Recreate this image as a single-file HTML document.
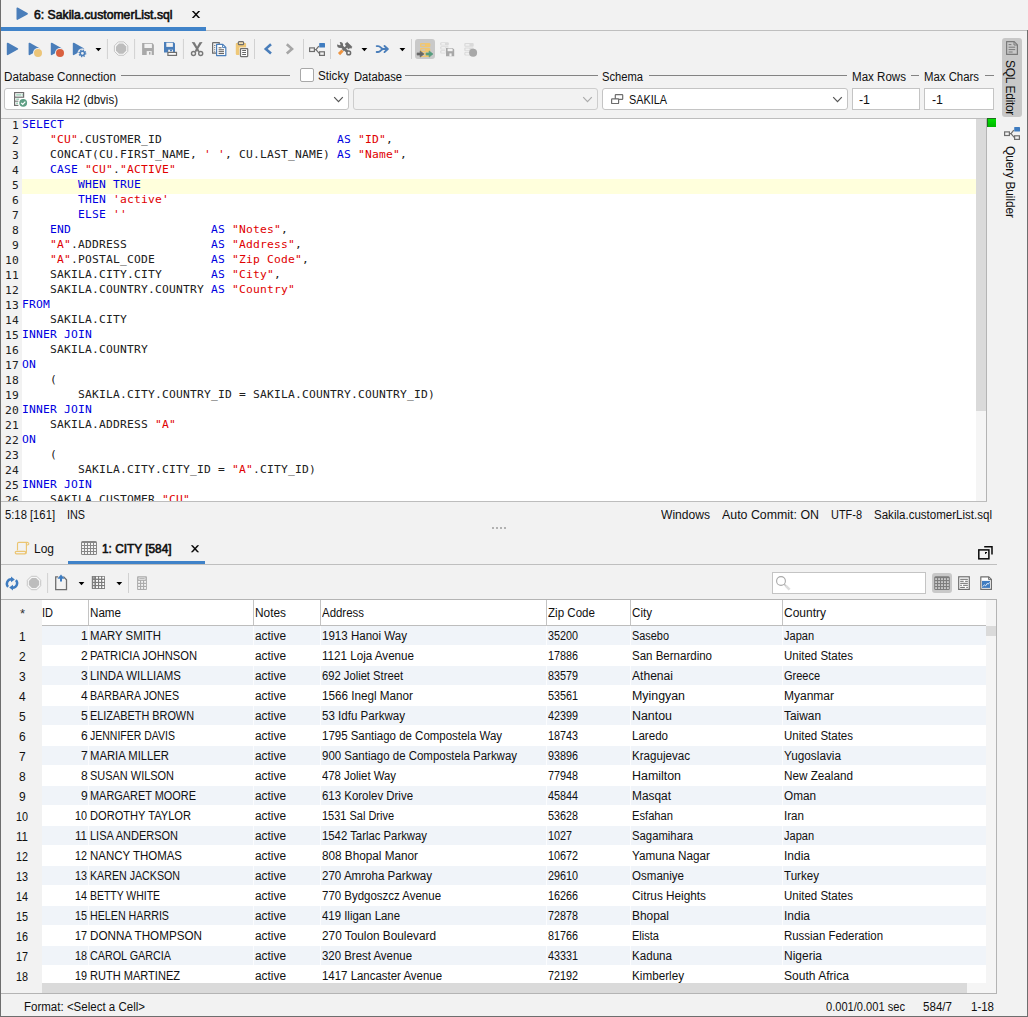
<!DOCTYPE html>
<html lang="en"><head><meta charset="utf-8"><title>DbVisualizer SQL Commander</title>
<style>
html,body{margin:0;padding:0}
body{width:1028px;height:1017px;position:relative;overflow:hidden;background:#f2f2f2;font-family:"Liberation Sans",sans-serif;font-size:12px;color:#000}
.a{position:absolute}
.t{position:absolute;white-space:pre;line-height:16px;height:16px;font-size:12px;color:#101010}
.b{font-weight:bold}
.sb{-webkit-text-stroke:0.6px #101010}
.combo{position:absolute;box-sizing:border-box;border:1px solid #c4c4c4;border-radius:3px;background:#fff;height:22px}
.combo.dis{background:#f2f2f2;border-color:#cdcdcd}
.code{position:absolute;white-space:pre;font-family:"DejaVu Sans Mono","Liberation Mono",monospace;font-size:11.3px;letter-spacing:0.197px;line-height:15px;height:15px;color:#202020}
.gn{position:absolute;white-space:pre;font-family:"DejaVu Sans Mono","Liberation Mono",monospace;font-size:11.3px;letter-spacing:0.197px;line-height:15px;height:15px;color:#202020;left:0;width:18px;text-align:right}
.k{color:#0000e0}
.s{color:#e00000}
svg{position:absolute;overflow:visible}
</style></head>
<body>
<div class="a" style="left:0px;top:0px;width:1px;height:1017px;background:#6e6e6e;"></div>
<div class="a" style="left:0px;top:1016px;width:1028px;height:1px;background:#6e6e6e;"></div>
<div class="a" style="left:1027px;top:30px;width:1px;height:987px;background:#6e6e6e;"></div>
<!-- editor tab -->
<span class="t sb" style="left:34px;top:7px;transform:scaleX(1.0180);transform-origin:0 0;">6: Sakila.customerList.sql</span>
<div class="a" style="left:1px;top:27px;width:205px;height:4px;background:#4083c9;"></div>
<div class="a" style="left:206px;top:30px;width:821px;height:1px;background:#bfbfbf;"></div>
<!-- main toolbar -->
<span class="t " style="left:4px;top:69px;transform:scaleX(0.9705);transform-origin:0 0;">Database Connection</span>
<div class="a" style="left:121px;top:75px;width:169px;height:1px;background:#838383;"></div>
<div class="a" style="left:300px;top:68px;width:14px;height:14px;background:#fff;box-sizing:border-box;border:1px solid #a8a8a8;border-radius:2px"></div>
<span class="t " style="left:318px;top:68px;transform:scaleX(0.9686);transform-origin:0 0;">Sticky</span>
<span class="t " style="left:353.5px;top:69px;transform:scaleX(0.9344);transform-origin:0 0;">Database</span>
<div class="a" style="left:405px;top:75px;width:193px;height:1px;background:#838383;"></div>
<span class="t " style="left:602px;top:69px;transform:scaleX(0.9314);transform-origin:0 0;">Schema</span>
<div class="a" style="left:649px;top:75px;width:198px;height:1px;background:#838383;"></div>
<span class="t " style="left:852px;top:69px;transform:scaleX(0.9641);transform-origin:0 0;">Max Rows</span>
<div class="a" style="left:911px;top:75px;width:8px;height:1px;background:#838383;"></div>
<span class="t " style="left:924px;top:69px;transform:scaleX(0.9480);transform-origin:0 0;">Max Chars</span>
<div class="a" style="left:985px;top:75px;width:9px;height:1px;background:#838383;"></div>
<div class="combo" style="left:4px;top:88px;width:345px"></div>
<span class="t " style="left:31px;top:92px;transform:scaleX(0.9592);transform-origin:0 0;">Sakila H2 (dbvis)</span>
<div class="combo dis" style="left:353px;top:88px;width:245px"></div>
<div class="combo" style="left:602px;top:88px;width:246px"></div>
<span class="t " style="left:629px;top:92px;transform:scaleX(0.9042);transform-origin:0 0;">SAKILA</span>
<div class="combo" style="left:852px;top:88px;width:68px;border-radius:0"></div>
<span class="t " style="left:859px;top:92px;transform:scaleX(1.0309);transform-origin:0 0;">-1</span>
<div class="combo" style="left:924px;top:88px;width:70px;border-radius:0"></div>
<span class="t " style="left:932px;top:92px;transform:scaleX(1.0309);transform-origin:0 0;">-1</span>
<!-- SQL editor -->
<div class="a" style="left:1px;top:118px;width:986px;height:1px;background:#bdbdbd;"></div>
<div class="a" style="left:1px;top:119px;width:21px;height:382px;background:#f2f2f2;"></div>
<div class="a" style="left:22px;top:119px;width:954px;height:382px;background:#fff;"></div>
<div class="a" style="left:976px;top:119px;width:10px;height:382px;background:#f5f5f5;"></div>
<div class="a" style="left:976px;top:119px;width:10px;height:292px;background:#dadada;"></div>
<div class="a" style="left:986px;top:118px;width:1px;height:384px;background:#b4b4b4;"></div>
<div class="a" style="left:1px;top:501px;width:986px;height:1px;background:#bdbdbd;"></div>
<div class="a" style="left:987px;top:118px;width:9px;height:9px;background:#00d200;border-left:1px solid #1e6e1e;border-top:1px solid #1e6e1e;box-sizing:border-box;background:linear-gradient(#00e000,#00b400)"></div>
<div class="a" style="left:22px;top:179px;width:954px;height:15px;background:#ffffdc;"></div>
<div class="a" style="left:1px;top:119px;width:975px;height:382px;overflow:hidden">
<span class="gn" style="top:-1px">1</span><span class="code" style="left:21px;top:-2px"><span class="k">SELECT</span></span>
<span class="gn" style="top:14px">2</span><span class="code" style="left:21px;top:13px">    <span class="s">"CU"</span>.CUSTOMER_ID                         <span class="k">AS</span> <span class="s">"ID"</span>,</span>
<span class="gn" style="top:29px">3</span><span class="code" style="left:21px;top:28px">    CONCAT(CU.FIRST_NAME, <span class="s">' '</span>, CU.LAST_NAME) <span class="k">AS</span> <span class="s">"Name"</span>,</span>
<span class="gn" style="top:44px">4</span><span class="code" style="left:21px;top:43px">    <span class="k">CASE</span> <span class="s">"CU"</span>.<span class="s">"ACTIVE"</span></span>
<span class="gn" style="top:59px">5</span><span class="code" style="left:21px;top:58px">        <span class="k">WHEN TRUE</span></span>
<span class="gn" style="top:74px">6</span><span class="code" style="left:21px;top:73px">        <span class="k">THEN</span> <span class="s">'active'</span></span>
<span class="gn" style="top:89px">7</span><span class="code" style="left:21px;top:88px">        <span class="k">ELSE</span> <span class="s">''</span></span>
<span class="gn" style="top:104px">8</span><span class="code" style="left:21px;top:103px">    <span class="k">END</span>                    <span class="k">AS</span> <span class="s">"Notes"</span>,</span>
<span class="gn" style="top:119px">9</span><span class="code" style="left:21px;top:118px">    <span class="s">"A"</span>.ADDRESS            <span class="k">AS</span> <span class="s">"Address"</span>,</span>
<span class="gn" style="top:134px">10</span><span class="code" style="left:21px;top:133px">    <span class="s">"A"</span>.POSTAL_CODE        <span class="k">AS</span> <span class="s">"Zip Code"</span>,</span>
<span class="gn" style="top:149px">11</span><span class="code" style="left:21px;top:148px">    SAKILA.CITY.CITY       <span class="k">AS</span> <span class="s">"City"</span>,</span>
<span class="gn" style="top:164px">12</span><span class="code" style="left:21px;top:163px">    SAKILA.COUNTRY.COUNTRY <span class="k">AS</span> <span class="s">"Country"</span></span>
<span class="gn" style="top:179px">13</span><span class="code" style="left:21px;top:178px"><span class="k">FROM</span></span>
<span class="gn" style="top:194px">14</span><span class="code" style="left:21px;top:193px">    SAKILA.CITY</span>
<span class="gn" style="top:209px">15</span><span class="code" style="left:21px;top:208px"><span class="k">INNER JOIN</span></span>
<span class="gn" style="top:224px">16</span><span class="code" style="left:21px;top:223px">    SAKILA.COUNTRY</span>
<span class="gn" style="top:239px">17</span><span class="code" style="left:21px;top:238px"><span class="k">ON</span></span>
<span class="gn" style="top:254px">18</span><span class="code" style="left:21px;top:253px">    (</span>
<span class="gn" style="top:269px">19</span><span class="code" style="left:21px;top:268px">        SAKILA.CITY.COUNTRY_ID = SAKILA.COUNTRY.COUNTRY_ID)</span>
<span class="gn" style="top:284px">20</span><span class="code" style="left:21px;top:283px"><span class="k">INNER JOIN</span></span>
<span class="gn" style="top:299px">21</span><span class="code" style="left:21px;top:298px">    SAKILA.ADDRESS <span class="s">"A"</span></span>
<span class="gn" style="top:314px">22</span><span class="code" style="left:21px;top:313px"><span class="k">ON</span></span>
<span class="gn" style="top:329px">23</span><span class="code" style="left:21px;top:328px">    (</span>
<span class="gn" style="top:344px">24</span><span class="code" style="left:21px;top:343px">        SAKILA.CITY.CITY_ID = <span class="s">"A"</span>.CITY_ID)</span>
<span class="gn" style="top:359px">25</span><span class="code" style="left:21px;top:358px"><span class="k">INNER JOIN</span></span>
<span class="gn" style="top:374px">26</span><span class="code" style="left:21px;top:373px">    SAKILA.CUSTOMER <span class="s">"CU"</span></span>
</div>
<span class="t " style="left:5px;top:507px;transform:scaleX(0.9367);transform-origin:0 0;">5:18 [161]</span>
<span class="t " style="left:67px;top:507px;transform:scaleX(0.8998);transform-origin:0 0;">INS</span>
<span class="t " style="left:661px;top:507px;transform:scaleX(1.0066);transform-origin:0 0;">Windows</span>
<span class="t " style="left:722px;top:507px;transform:scaleX(1.0317);transform-origin:0 0;">Auto Commit: ON</span>
<span class="t " style="left:831px;top:507px;transform:scaleX(0.9119);transform-origin:0 0;">UTF-8</span>
<span class="t " style="left:874px;top:507px;transform:scaleX(0.9616);transform-origin:0 0;">Sakila.customerList.sql</span>
<div class="a" style="left:492px;top:527px;width:2px;height:2px;background:#b2b2b2;"></div>
<div class="a" style="left:496px;top:527px;width:2px;height:2px;background:#b2b2b2;"></div>
<div class="a" style="left:500px;top:527px;width:2px;height:2px;background:#b2b2b2;"></div>
<div class="a" style="left:504px;top:527px;width:2px;height:2px;background:#b2b2b2;"></div>
<!-- result tabs -->
<span class="t " style="left:33.6px;top:541px;transform:scaleX(0.9990);transform-origin:0 0;">Log</span>
<span class="t sb" style="left:102px;top:541px;transform:scaleX(0.9861);transform-origin:0 0;">1: CITY [584]</span>
<div class="a" style="left:68px;top:561px;width:137px;height:4px;background:#4083c9;"></div>
<div class="a" style="left:1px;top:564px;width:996px;height:1px;background:#bfbfbf;"></div>
<!-- result toolbar -->
<div class="a" style="left:772px;top:572px;width:154px;height:22px;box-sizing:border-box;border:1px solid #c4c4c4;background:#fff"></div>
<!-- result grid -->
<div class="a" style="left:1px;top:599px;width:996px;height:1px;background:#b4b4b4;"></div>
<div class="a" style="left:996px;top:599px;width:1px;height:395px;background:#b4b4b4;"></div>
<div class="a" style="left:1px;top:993px;width:996px;height:1px;background:#b4b4b4;"></div>
<div class="a" style="left:42px;top:600px;width:944px;height:25px;background:#fff;"></div>
<div class="a" style="left:42px;top:625px;width:944px;height:1px;background:#bdbdbd;"></div>
<div class="a" style="left:42px;top:626px;width:944px;height:357px;background:#fff;"></div>
<span class="t " style="left:20px;top:606px;font-size:13px;color:#333">*</span>
<span class="t " style="left:41.5px;top:605px;transform:scaleX(0.9167);transform-origin:0 0;">ID</span>
<div class="a" style="left:88px;top:600px;width:1px;height:25px;background:#c4c4c4;"></div>
<span class="t " style="left:90px;top:605px;transform:scaleX(0.9685);transform-origin:0 0;">Name</span>
<div class="a" style="left:253px;top:600px;width:1px;height:25px;background:#c4c4c4;"></div>
<span class="t " style="left:255px;top:605px;transform:scaleX(0.9889);transform-origin:0 0;">Notes</span>
<div class="a" style="left:320px;top:600px;width:1px;height:25px;background:#c4c4c4;"></div>
<span class="t " style="left:322px;top:605px;transform:scaleX(0.9541);transform-origin:0 0;">Address</span>
<div class="a" style="left:546px;top:600px;width:1px;height:25px;background:#c4c4c4;"></div>
<span class="t " style="left:548px;top:605px;transform:scaleX(0.9653);transform-origin:0 0;">Zip Code</span>
<div class="a" style="left:630px;top:600px;width:1px;height:25px;background:#c4c4c4;"></div>
<span class="t " style="left:632px;top:605px;transform:scaleX(0.9678);transform-origin:0 0;">City</span>
<div class="a" style="left:782px;top:600px;width:1px;height:25px;background:#c4c4c4;"></div>
<span class="t " style="left:784px;top:605px;transform:scaleX(0.9996);transform-origin:0 0;">Country</span>
<div class="a" style="left:0;top:626px;width:986px;height:357px;overflow:hidden">
<div class="a" style="left:42px;top:0px;width:944px;height:19px;background:#f0f4f9"></div><span class="t " style="left:19px;top:3px;">1</span>
<span class="t " style="left:81px;top:2px;">1</span>
<span class="t " style="left:90px;top:2px;transform:scaleX(0.9479);transform-origin:0 0;">MARY SMITH</span>
<span class="t " style="left:255px;top:2px;transform:scaleX(0.9889);transform-origin:0 0;">active</span>
<span class="t " style="left:322px;top:2px;transform:scaleX(0.9630);transform-origin:0 0;">1913 Hanoi Way</span>
<span class="t " style="left:548px;top:2px;transform:scaleX(0.8991);transform-origin:0 0;">35200</span>
<span class="t " style="left:632px;top:2px;transform:scaleX(0.9091);transform-origin:0 0;">Sasebo</span>
<span class="t " style="left:784px;top:2px;transform:scaleX(0.9176);transform-origin:0 0;">Japan</span>
<span class="t " style="left:19px;top:23px;">2</span>
<span class="t " style="left:81px;top:22px;">2</span>
<span class="t " style="left:90px;top:22px;transform:scaleX(0.9312);transform-origin:0 0;">PATRICIA JOHNSON</span>
<span class="t " style="left:255px;top:22px;transform:scaleX(0.9889);transform-origin:0 0;">active</span>
<span class="t " style="left:322px;top:22px;transform:scaleX(0.9687);transform-origin:0 0;">1121 Loja Avenue</span>
<span class="t " style="left:548px;top:22px;transform:scaleX(0.8991);transform-origin:0 0;">17886</span>
<span class="t " style="left:632px;top:22px;transform:scaleX(0.9593);transform-origin:0 0;">San Bernardino</span>
<span class="t " style="left:784px;top:22px;transform:scaleX(0.9578);transform-origin:0 0;">United States</span>
<div class="a" style="left:42px;top:40px;width:944px;height:19px;background:#f0f4f9"></div><span class="t " style="left:19px;top:43px;">3</span>
<span class="t " style="left:81px;top:42px;">3</span>
<span class="t " style="left:90px;top:42px;transform:scaleX(0.9542);transform-origin:0 0;">LINDA WILLIAMS</span>
<span class="t " style="left:255px;top:42px;transform:scaleX(0.9889);transform-origin:0 0;">active</span>
<span class="t " style="left:322px;top:42px;transform:scaleX(0.9341);transform-origin:0 0;">692 Joliet Street</span>
<span class="t " style="left:548px;top:42px;transform:scaleX(0.8991);transform-origin:0 0;">83579</span>
<span class="t " style="left:632px;top:42px;transform:scaleX(1.0074);transform-origin:0 0;">Athenai</span>
<span class="t " style="left:784px;top:42px;transform:scaleX(0.9148);transform-origin:0 0;">Greece</span>
<span class="t " style="left:19px;top:63px;">4</span>
<span class="t " style="left:81px;top:62px;">4</span>
<span class="t " style="left:90px;top:62px;transform:scaleX(0.8897);transform-origin:0 0;">BARBARA JONES</span>
<span class="t " style="left:255px;top:62px;transform:scaleX(0.9889);transform-origin:0 0;">active</span>
<span class="t " style="left:322px;top:62px;transform:scaleX(0.9743);transform-origin:0 0;">1566 Inegl Manor</span>
<span class="t " style="left:548px;top:62px;transform:scaleX(0.8991);transform-origin:0 0;">53561</span>
<span class="t " style="left:632px;top:62px;transform:scaleX(1.0320);transform-origin:0 0;">Myingyan</span>
<span class="t " style="left:784px;top:62px;transform:scaleX(0.9998);transform-origin:0 0;">Myanmar</span>
<div class="a" style="left:42px;top:80px;width:944px;height:19px;background:#f0f4f9"></div><span class="t " style="left:19px;top:83px;">5</span>
<span class="t " style="left:81px;top:82px;">5</span>
<span class="t " style="left:90px;top:82px;transform:scaleX(0.9068);transform-origin:0 0;">ELIZABETH BROWN</span>
<span class="t " style="left:255px;top:82px;transform:scaleX(0.9889);transform-origin:0 0;">active</span>
<span class="t " style="left:322px;top:82px;transform:scaleX(0.9646);transform-origin:0 0;">53 Idfu Parkway</span>
<span class="t " style="left:548px;top:82px;transform:scaleX(0.8991);transform-origin:0 0;">42399</span>
<span class="t " style="left:632px;top:82px;transform:scaleX(1.0338);transform-origin:0 0;">Nantou</span>
<span class="t " style="left:784px;top:82px;transform:scaleX(0.9906);transform-origin:0 0;">Taiwan</span>
<span class="t " style="left:19px;top:103px;">6</span>
<span class="t " style="left:81px;top:102px;">6</span>
<span class="t " style="left:90px;top:102px;transform:scaleX(0.8751);transform-origin:0 0;">JENNIFER DAVIS</span>
<span class="t " style="left:255px;top:102px;transform:scaleX(0.9889);transform-origin:0 0;">active</span>
<span class="t " style="left:322px;top:102px;transform:scaleX(0.9557);transform-origin:0 0;">1795 Santiago de Compostela Way</span>
<span class="t " style="left:548px;top:102px;transform:scaleX(0.8991);transform-origin:0 0;">18743</span>
<span class="t " style="left:632px;top:102px;transform:scaleX(0.9635);transform-origin:0 0;">Laredo</span>
<span class="t " style="left:784px;top:102px;transform:scaleX(0.9578);transform-origin:0 0;">United States</span>
<div class="a" style="left:42px;top:120px;width:944px;height:19px;background:#f0f4f9"></div><span class="t " style="left:19px;top:123px;">7</span>
<span class="t " style="left:81px;top:122px;">7</span>
<span class="t " style="left:90px;top:122px;transform:scaleX(0.9402);transform-origin:0 0;">MARIA MILLER</span>
<span class="t " style="left:255px;top:122px;transform:scaleX(0.9889);transform-origin:0 0;">active</span>
<span class="t " style="left:322px;top:122px;transform:scaleX(0.9553);transform-origin:0 0;">900 Santiago de Compostela Parkway</span>
<span class="t " style="left:548px;top:122px;transform:scaleX(0.8991);transform-origin:0 0;">93896</span>
<span class="t " style="left:632px;top:122px;transform:scaleX(0.9661);transform-origin:0 0;">Kragujevac</span>
<span class="t " style="left:784px;top:122px;transform:scaleX(0.9821);transform-origin:0 0;">Yugoslavia</span>
<span class="t " style="left:19px;top:143px;">8</span>
<span class="t " style="left:81px;top:142px;">8</span>
<span class="t " style="left:90px;top:142px;transform:scaleX(0.9129);transform-origin:0 0;">SUSAN WILSON</span>
<span class="t " style="left:255px;top:142px;transform:scaleX(0.9889);transform-origin:0 0;">active</span>
<span class="t " style="left:322px;top:142px;transform:scaleX(0.9456);transform-origin:0 0;">478 Joliet Way</span>
<span class="t " style="left:548px;top:142px;transform:scaleX(0.8991);transform-origin:0 0;">77948</span>
<span class="t " style="left:632px;top:142px;transform:scaleX(1.0349);transform-origin:0 0;">Hamilton</span>
<span class="t " style="left:784px;top:142px;transform:scaleX(0.9759);transform-origin:0 0;">New Zealand</span>
<div class="a" style="left:42px;top:160px;width:944px;height:19px;background:#f0f4f9"></div><span class="t " style="left:19px;top:163px;">9</span>
<span class="t " style="left:81px;top:162px;">9</span>
<span class="t " style="left:90px;top:162px;transform:scaleX(0.9102);transform-origin:0 0;">MARGARET MOORE</span>
<span class="t " style="left:255px;top:162px;transform:scaleX(0.9889);transform-origin:0 0;">active</span>
<span class="t " style="left:322px;top:162px;transform:scaleX(0.9541);transform-origin:0 0;">613 Korolev Drive</span>
<span class="t " style="left:548px;top:162px;transform:scaleX(0.8991);transform-origin:0 0;">45844</span>
<span class="t " style="left:632px;top:162px;transform:scaleX(0.9911);transform-origin:0 0;">Masqat</span>
<span class="t " style="left:784px;top:162px;transform:scaleX(0.9792);transform-origin:0 0;">Oman</span>
<span class="t " style="left:16px;top:183px;transform:scaleX(0.8991);transform-origin:0 0;">10</span>
<span class="t " style="left:75px;top:182px;transform:scaleX(0.8991);transform-origin:0 0;">10</span>
<span class="t " style="left:90px;top:182px;transform:scaleX(0.9255);transform-origin:0 0;">DOROTHY TAYLOR</span>
<span class="t " style="left:255px;top:182px;transform:scaleX(0.9889);transform-origin:0 0;">active</span>
<span class="t " style="left:322px;top:182px;transform:scaleX(0.9148);transform-origin:0 0;">1531 Sal Drive</span>
<span class="t " style="left:548px;top:182px;transform:scaleX(0.8991);transform-origin:0 0;">53628</span>
<span class="t " style="left:632px;top:182px;transform:scaleX(0.9311);transform-origin:0 0;">Esfahan</span>
<span class="t " style="left:784px;top:182px;transform:scaleX(0.9672);transform-origin:0 0;">Iran</span>
<div class="a" style="left:42px;top:200px;width:944px;height:19px;background:#f0f4f9"></div><span class="t " style="left:16px;top:203px;transform:scaleX(0.9634);transform-origin:0 0;">11</span>
<span class="t " style="left:75px;top:202px;transform:scaleX(0.9634);transform-origin:0 0;">11</span>
<span class="t " style="left:90px;top:202px;transform:scaleX(0.9163);transform-origin:0 0;">LISA ANDERSON</span>
<span class="t " style="left:255px;top:202px;transform:scaleX(0.9889);transform-origin:0 0;">active</span>
<span class="t " style="left:322px;top:202px;transform:scaleX(0.9445);transform-origin:0 0;">1542 Tarlac Parkway</span>
<span class="t " style="left:548px;top:202px;transform:scaleX(0.8991);transform-origin:0 0;">1027</span>
<span class="t " style="left:632px;top:202px;transform:scaleX(0.9427);transform-origin:0 0;">Sagamihara</span>
<span class="t " style="left:784px;top:202px;transform:scaleX(0.9176);transform-origin:0 0;">Japan</span>
<span class="t " style="left:16px;top:223px;transform:scaleX(0.8991);transform-origin:0 0;">12</span>
<span class="t " style="left:75px;top:222px;transform:scaleX(0.8991);transform-origin:0 0;">12</span>
<span class="t " style="left:90px;top:222px;transform:scaleX(0.9559);transform-origin:0 0;">NANCY THOMAS</span>
<span class="t " style="left:255px;top:222px;transform:scaleX(0.9889);transform-origin:0 0;">active</span>
<span class="t " style="left:322px;top:222px;transform:scaleX(0.9789);transform-origin:0 0;">808 Bhopal Manor</span>
<span class="t " style="left:548px;top:222px;transform:scaleX(0.8991);transform-origin:0 0;">10672</span>
<span class="t " style="left:632px;top:222px;transform:scaleX(0.9772);transform-origin:0 0;">Yamuna Nagar</span>
<span class="t " style="left:784px;top:222px;transform:scaleX(0.9992);transform-origin:0 0;">India</span>
<div class="a" style="left:42px;top:240px;width:944px;height:19px;background:#f0f4f9"></div><span class="t " style="left:16px;top:243px;transform:scaleX(0.8991);transform-origin:0 0;">13</span>
<span class="t " style="left:75px;top:242px;transform:scaleX(0.8991);transform-origin:0 0;">13</span>
<span class="t " style="left:90px;top:242px;transform:scaleX(0.8879);transform-origin:0 0;">KAREN JACKSON</span>
<span class="t " style="left:255px;top:242px;transform:scaleX(0.9889);transform-origin:0 0;">active</span>
<span class="t " style="left:322px;top:242px;transform:scaleX(0.9644);transform-origin:0 0;">270 Amroha Parkway</span>
<span class="t " style="left:548px;top:242px;transform:scaleX(0.8991);transform-origin:0 0;">29610</span>
<span class="t " style="left:632px;top:242px;transform:scaleX(0.9627);transform-origin:0 0;">Osmaniye</span>
<span class="t " style="left:784px;top:242px;transform:scaleX(0.9661);transform-origin:0 0;">Turkey</span>
<span class="t " style="left:16px;top:263px;transform:scaleX(0.8991);transform-origin:0 0;">14</span>
<span class="t " style="left:75px;top:262px;transform:scaleX(0.8991);transform-origin:0 0;">14</span>
<span class="t " style="left:90px;top:262px;transform:scaleX(0.8701);transform-origin:0 0;">BETTY WHITE</span>
<span class="t " style="left:255px;top:262px;transform:scaleX(0.9889);transform-origin:0 0;">active</span>
<span class="t " style="left:322px;top:262px;transform:scaleX(0.9556);transform-origin:0 0;">770 Bydgoszcz Avenue</span>
<span class="t " style="left:548px;top:262px;transform:scaleX(0.8991);transform-origin:0 0;">16266</span>
<span class="t " style="left:632px;top:262px;transform:scaleX(0.9820);transform-origin:0 0;">Citrus Heights</span>
<span class="t " style="left:784px;top:262px;transform:scaleX(0.9578);transform-origin:0 0;">United States</span>
<div class="a" style="left:42px;top:280px;width:944px;height:19px;background:#f0f4f9"></div><span class="t " style="left:16px;top:283px;transform:scaleX(0.8991);transform-origin:0 0;">15</span>
<span class="t " style="left:75px;top:282px;transform:scaleX(0.8991);transform-origin:0 0;">15</span>
<span class="t " style="left:90px;top:282px;transform:scaleX(0.8908);transform-origin:0 0;">HELEN HARRIS</span>
<span class="t " style="left:255px;top:282px;transform:scaleX(0.9889);transform-origin:0 0;">active</span>
<span class="t " style="left:322px;top:282px;transform:scaleX(0.9504);transform-origin:0 0;">419 Iligan Lane</span>
<span class="t " style="left:548px;top:282px;transform:scaleX(0.8991);transform-origin:0 0;">72878</span>
<span class="t " style="left:632px;top:282px;transform:scaleX(0.9903);transform-origin:0 0;">Bhopal</span>
<span class="t " style="left:784px;top:282px;transform:scaleX(0.9992);transform-origin:0 0;">India</span>
<span class="t " style="left:16px;top:303px;transform:scaleX(0.8991);transform-origin:0 0;">16</span>
<span class="t " style="left:75px;top:302px;transform:scaleX(0.8991);transform-origin:0 0;">17</span>
<span class="t " style="left:90px;top:302px;transform:scaleX(0.9728);transform-origin:0 0;">DONNA THOMPSON</span>
<span class="t " style="left:255px;top:302px;transform:scaleX(0.9889);transform-origin:0 0;">active</span>
<span class="t " style="left:322px;top:302px;transform:scaleX(0.9839);transform-origin:0 0;">270 Toulon Boulevard</span>
<span class="t " style="left:548px;top:302px;transform:scaleX(0.8991);transform-origin:0 0;">81766</span>
<span class="t " style="left:632px;top:302px;transform:scaleX(0.9201);transform-origin:0 0;">Elista</span>
<span class="t " style="left:784px;top:302px;transform:scaleX(0.9514);transform-origin:0 0;">Russian Federation</span>
<div class="a" style="left:42px;top:320px;width:944px;height:19px;background:#f0f4f9"></div><span class="t " style="left:16px;top:323px;transform:scaleX(0.8991);transform-origin:0 0;">17</span>
<span class="t " style="left:75px;top:322px;transform:scaleX(0.8991);transform-origin:0 0;">18</span>
<span class="t " style="left:90px;top:322px;transform:scaleX(0.8976);transform-origin:0 0;">CAROL GARCIA</span>
<span class="t " style="left:255px;top:322px;transform:scaleX(0.9889);transform-origin:0 0;">active</span>
<span class="t " style="left:322px;top:322px;transform:scaleX(0.9522);transform-origin:0 0;">320 Brest Avenue</span>
<span class="t " style="left:548px;top:322px;transform:scaleX(0.8991);transform-origin:0 0;">43331</span>
<span class="t " style="left:632px;top:322px;transform:scaleX(0.9668);transform-origin:0 0;">Kaduna</span>
<span class="t " style="left:784px;top:322px;transform:scaleX(0.9996);transform-origin:0 0;">Nigeria</span>
<span class="t " style="left:16px;top:343px;transform:scaleX(0.8991);transform-origin:0 0;">18</span>
<span class="t " style="left:75px;top:342px;transform:scaleX(0.8991);transform-origin:0 0;">19</span>
<span class="t " style="left:90px;top:342px;transform:scaleX(0.9205);transform-origin:0 0;">RUTH MARTINEZ</span>
<span class="t " style="left:255px;top:342px;transform:scaleX(0.9889);transform-origin:0 0;">active</span>
<span class="t " style="left:322px;top:342px;transform:scaleX(0.9533);transform-origin:0 0;">1417 Lancaster Avenue</span>
<span class="t " style="left:548px;top:342px;transform:scaleX(0.8991);transform-origin:0 0;">72192</span>
<span class="t " style="left:632px;top:342px;transform:scaleX(0.9747);transform-origin:0 0;">Kimberley</span>
<span class="t " style="left:784px;top:342px;transform:scaleX(1.0045);transform-origin:0 0;">South Africa</span>
<div class="a" style="left:88px;top:0px;width:1px;height:357px;background:rgba(255,255,255,.75)"></div><div class="a" style="left:253px;top:0px;width:1px;height:357px;background:rgba(255,255,255,.75)"></div><div class="a" style="left:320px;top:0px;width:1px;height:357px;background:rgba(255,255,255,.75)"></div><div class="a" style="left:546px;top:0px;width:1px;height:357px;background:rgba(255,255,255,.75)"></div><div class="a" style="left:630px;top:0px;width:1px;height:357px;background:rgba(255,255,255,.75)"></div><div class="a" style="left:782px;top:0px;width:1px;height:357px;background:rgba(255,255,255,.75)"></div></div>
<div class="a" style="left:986px;top:600px;width:10px;height:393px;background:#f5f5f5;"></div>
<div class="a" style="left:986px;top:626px;width:10px;height:10px;background:#dadada;"></div>
<div class="a" style="left:42px;top:983px;width:944px;height:10px;background:#f5f5f5;"></div>
<div class="a" style="left:42px;top:983px;width:925px;height:10px;background:#dadada;"></div>
<span class="t " style="left:24px;top:999px;transform:scaleX(0.9599);transform-origin:0 0;">Format: &lt;Select a Cell&gt;</span>
<span class="t " style="left:826px;top:999px;transform:scaleX(0.9251);transform-origin:0 0;">0.001/0.001 sec</span>
<span class="t " style="left:923px;top:999px;transform:scaleX(0.9658);transform-origin:0 0;">584/7</span>
<span class="t " style="left:970.5px;top:999px;transform:scaleX(0.9576);transform-origin:0 0;">1-18</span>
<!-- side tabs -->
<div class="a" style="left:1002px;top:38px;width:20px;height:79px;background:#c8c8c8;border-radius:3px"></div>
<span class="t" style="left:1006px;top:60px;letter-spacing:-0.325px;transform-origin:0 0;transform:rotate(90deg) translate(0,-12px)">SQL Editor</span>
<span class="t" style="left:1006px;top:146px;letter-spacing:-0.105px;transform-origin:0 0;transform:rotate(90deg) translate(0,-12px)">Query Builder</span>
<!-- icons -->
<svg style="left:0;top:0" width="1028" height="1017" viewBox="0 0 1028 1017">
<path d="M17.3 8.3L27.1 13.7L17.3 19.1Z" fill="#4a7eba" stroke="#4a7eba" stroke-width="1.6" stroke-linejoin="round"/>
<path d="M191.8 11h2.0l6.4 7h-2.0Z" fill="#0a0a0a" stroke="none" stroke-width="1" />
<path d="M200.2 11h-2.0l-6.4 7h2.0Z" fill="#0a0a0a" stroke="none" stroke-width="1" />
<path d="M7.6 43.5L17.4 48.9L7.6 54.3Z" fill="#4a7eba" stroke="#4a7eba" stroke-width="1.6" stroke-linejoin="round"/>
<path d="M29.4 43.5L39.2 48.9L29.4 54.3Z" fill="#4a7eba" stroke="#4a7eba" stroke-width="1.6" stroke-linejoin="round"/>
<circle cx="38" cy="53" r="5" fill="#f2f2f2" stroke="none" stroke-width="1" />
<circle cx="38" cy="53" r="4" fill="#ecc579" stroke="none" stroke-width="1" />
<path d="M51.6 43.5L61.4 48.9L51.6 54.3Z" fill="#4a7eba" stroke="#4a7eba" stroke-width="1.6" stroke-linejoin="round"/>
<circle cx="60" cy="53" r="5" fill="#f2f2f2" stroke="none" stroke-width="1" />
<circle cx="60" cy="53" r="4" fill="#d9603f" stroke="none" stroke-width="1" />
<path d="M73.6 43.5L83.4 48.9L73.6 54.3Z" fill="#4a7eba" stroke="#4a7eba" stroke-width="1.6" stroke-linejoin="round"/>
<circle cx="82.4" cy="53.3" r="4.9" fill="#f2f2f2" stroke="none" stroke-width="1" />
<circle cx="82.4" cy="53.3" r="3.3" fill="none" stroke="#4a7eba" stroke-width="1.3" stroke-dasharray="1.296 1.296"/>
<circle cx="82.4" cy="53.3" r="2.15" fill="none" stroke="#4a7eba" stroke-width="1.5" />
<path d="M95.5 48h5.8l-2.9 3.2Z" fill="#000" stroke="none" stroke-width="1" />
<rect x="106.9" y="39" width="1" height="20" rx="0" fill="#d1d1d1" stroke="none" stroke-width="1" />
<path d="M127.80 51.38L123.88 55.30L118.32 55.30L114.40 51.38L114.40 45.82L118.32 41.90L123.88 41.90L127.80 45.82Z" fill="#f6f6f6" stroke="#c6c6c6" stroke-width="1" />
<path d="M126.20 50.71L123.21 53.70L118.99 53.70L116.00 50.71L116.00 46.49L118.99 43.50L123.21 43.50L126.20 46.49Z" fill="#bdbdbd" stroke="none" stroke-width="1" />
<rect x="134.1" y="39" width="1" height="20" rx="0" fill="#d1d1d1" stroke="none" stroke-width="1" />
<path d="M142.1 43.1h10.2l1.6 1.6v10.3h-11.8Z" fill="#a9a9a9" stroke="none" stroke-width="1" />
<rect x="144.4" y="43.8" width="7.5" height="4.2" rx="0" fill="#f2f2f2" stroke="none" stroke-width="1" />
<rect x="146.7" y="51.1" width="5" height="3.9" rx="0" fill="#f2f2f2" stroke="none" stroke-width="1" />
<rect x="149" y="52" width="1.5" height="2.6" rx="0" fill="#a9a9a9" stroke="none" stroke-width="1" />
<path d="M164 41.9h9.4l1.6 1.6v9h-11Z" fill="#4a7eba" stroke="none" stroke-width="1" />
<rect x="166.3" y="42.7" width="6.6" height="4.2" rx="0" fill="#f2f2f2" stroke="none" stroke-width="1" />
<rect x="168.2" y="49.7" width="4.7" height="2.8" rx="0" fill="#f2f2f2" stroke="none" stroke-width="1" />
<rect x="170" y="49.7" width="2" height="1.6" rx="0" fill="#4a7eba" stroke="none" stroke-width="1" />
<rect x="167.9" y="52.4" width="8.6" height="3" rx="0" fill="#fafafa" stroke="#6e6e6e" stroke-width="1.2" />
<rect x="182.9" y="39" width="1" height="20" rx="0" fill="#d1d1d1" stroke="none" stroke-width="1" />
<path d="M191.7 42l3.0 0.2l4.9 9.0l-1.5 1.0Z" fill="#787878" stroke="none" stroke-width="1" />
<path d="M202.5 42l-3.0 0.2l-4.9 9.0l1.5 1.0Z" fill="#787878" stroke="none" stroke-width="1" />
<circle cx="193.5" cy="53.5" r="2" fill="none" stroke="#787878" stroke-width="1.4" />
<circle cx="200.7" cy="53.5" r="2" fill="none" stroke="#787878" stroke-width="1.4" />
<path d="M212.6 42.6h6.6v2.4M212.6 42.6v10.6h3.8" fill="none" stroke="#6e6e6e" stroke-width="1.2" />
<rect x="214" y="45" width="1.2" height="1" rx="0" fill="#8a8a8a" stroke="none" stroke-width="1" />
<rect x="215.7" y="45" width="1.6" height="1" rx="0" fill="#8a8a8a" stroke="none" stroke-width="1" />
<rect x="214" y="47.1" width="1.2" height="1" rx="0" fill="#8a8a8a" stroke="none" stroke-width="1" />
<rect x="214" y="49.2" width="1.2" height="1" rx="0" fill="#8a8a8a" stroke="none" stroke-width="1" />
<rect x="214" y="51.3" width="1.2" height="1" rx="0" fill="#8a8a8a" stroke="none" stroke-width="1" />
<path d="M216.6 44.4h6.2l3.0 3.0v8.2h-9.2Z" fill="#fff" stroke="#4a7eba" stroke-width="1.2" stroke-linejoin="round"/>
<path d="M222.6 44.6v3h3" fill="none" stroke="#4a7eba" stroke-width="1" />
<path d="M218.6 47.8L221.6 47.8" stroke="#555" stroke-width="1" fill="none" />
<path d="M218.6 49.8L224 49.8" stroke="#555" stroke-width="1" fill="none" />
<path d="M218.6 51.7L224 51.7" stroke="#555" stroke-width="1" fill="none" />
<path d="M218.6 53.6L224 53.6" stroke="#555" stroke-width="1" fill="none" />
<rect x="235.8" y="43" width="10.3" height="11.9" rx="0.8" fill="#efc878" stroke="none" stroke-width="1" />
<rect x="238.3" y="41.7" width="5.3" height="2.9" rx="0.9" fill="#f6dfae" stroke="#6e6e6e" stroke-width="1.2" />
<rect x="239.4" y="47.4" width="9.4" height="10" rx="0" fill="#f2f2f2" stroke="none" stroke-width="1" />
<rect x="240.5" y="48.6" width="7.2" height="8" rx="0.5" fill="#fff" stroke="#6e6e6e" stroke-width="1.2" />
<path d="M242.2 50.5L246 50.5" stroke="#666" stroke-width="1" fill="none" />
<path d="M242.2 52.5L246 52.5" stroke="#666" stroke-width="1" fill="none" />
<path d="M242.2 54.5L246 54.5" stroke="#666" stroke-width="1" fill="none" />
<rect x="254" y="39" width="1" height="20" rx="0" fill="#d1d1d1" stroke="none" stroke-width="1" />
<path d="M271 44.3l-5.2 4.6l5.2 4.6" fill="none" stroke="#4a7eba" stroke-width="2.6" stroke-linejoin="miter"/>
<path d="M286.8 44.3l5.2 4.6l-5.2 4.6" fill="none" stroke="#a6a6a6" stroke-width="2.6" />
<rect x="303" y="39" width="1" height="20" rx="0" fill="#d1d1d1" stroke="none" stroke-width="1" />
<rect x="309.6" y="47.9" width="4.8" height="3.6" rx="0" fill="none" stroke="#6e6e6e" stroke-width="1.2" />
<rect x="319.2" y="43" width="5.8" height="4.5" rx="0.6" fill="#3f7cc0" stroke="none" stroke-width="1" />
<rect x="319.6" y="51.8" width="4.8" height="3.6" rx="0" fill="none" stroke="#6e6e6e" stroke-width="1.2" />
<path d="M314.6 49.7h1.4L318.8 46.2M316 49.7L319.2 53.4" fill="none" stroke="#6e6e6e" stroke-width="1.2" />
<rect x="330" y="39" width="1" height="20" rx="0" fill="#d1d1d1" stroke="none" stroke-width="1" />
<path d="M339 54.1L342.6 50.5" stroke="#ee9440" stroke-width="3.0" fill="none" />
<path d="M342.8 50.3L347.7 45.7" stroke="#6c6c6c" stroke-width="2.2" fill="none" />
<path d="M345.1 43.9l2.2 -1.6l4.6 4.4l-0.6 1.6l-1.4 -0.6l-1.4 1.5Z" fill="#6c6c6c" stroke="#6c6c6c" stroke-width="0.6" stroke-linejoin="round"/>
<path d="M341.3 46.1L347.7 52.1" stroke="#6c6c6c" stroke-width="2.7" fill="none" />
<circle cx="340.1" cy="44.9" r="3" fill="#6c6c6c" stroke="none" stroke-width="1" />
<path d="M339.9 44.7l-3.6 -1.2l2.4 -2.6Z" fill="#f2f2f2" stroke="#f2f2f2" stroke-width="1.2" stroke-linejoin="round"/>
<circle cx="348.7" cy="52.9" r="1.9" fill="#f2f2f2" stroke="#6c6c6c" stroke-width="1.5" />
<path d="M361.5 48h5.8l-2.9 3.2Z" fill="#000" stroke="none" stroke-width="1" />
<path d="M376.7 46.1h1.4c2.6 0 3.0 2.95 5.2 2.95h4.0M376.7 52h1.4c2.6 0 3.0 -2.95 5.2 -2.95" fill="none" stroke="#4a7eba" stroke-width="1.9" stroke-linecap="round" stroke-linejoin="round"/>
<path d="M384.5 46l3.3 3.05l-3.3 3.05" fill="none" stroke="#4a7eba" stroke-width="1.9" stroke-linecap="round" stroke-linejoin="round"/>
<path d="M399.5 48h5.8l-2.9 3.2Z" fill="#000" stroke="none" stroke-width="1" />
<rect x="411" y="39" width="1" height="20" rx="0" fill="#d1d1d1" stroke="none" stroke-width="1" />
<rect x="415" y="39" width="20" height="20" rx="3" fill="#c9c9c9" stroke="none" stroke-width="1" />
<rect x="420" y="43" width="10.3" height="4.3" rx="1.2" fill="#f0c670" stroke="none" stroke-width="1" />
<rect x="421.4" y="44.2" width="3.6" height="1.9" rx="0.4" fill="#cfc6b4" stroke="none" stroke-width="1" />
<rect x="420" y="47.9" width="10.3" height="4.3" rx="1.2" fill="#f0c670" stroke="none" stroke-width="1" />
<rect x="421.4" y="49.1" width="3.6" height="1.9" rx="0.4" fill="#cfc6b4" stroke="none" stroke-width="1" />
<rect x="420" y="52.8" width="10.3" height="4.3" rx="1.2" fill="#f0c670" stroke="none" stroke-width="1" />
<rect x="421.4" y="54" width="3.6" height="1.9" rx="0.4" fill="#cfc6b4" stroke="none" stroke-width="1" />
<path d="M417.1 52.9h3.0v-2.0l3.9 3.1l-3.9 3.1v-2.0h-3.0Z" fill="#666" stroke="#666" stroke-width="0.6" stroke-linejoin="round"/>
<path d="M426.1 52.9h3.0v-2.0l3.9 3.1l-3.9 3.1v-2.0h-3.0Z" fill="#559c7e" stroke="#559c7e" stroke-width="0.6" stroke-linejoin="round"/>
<rect x="440.2" y="42.2" width="8.6" height="3.3" rx="1.0" fill="#dadada" stroke="none" stroke-width="1" />
<rect x="441.4" y="42.95" width="3.612" height="1.8" rx="0.3" fill="#f0f0f0" stroke="none" stroke-width="1" />
<rect x="440.2" y="46.2" width="8.6" height="3.3" rx="1.0" fill="#dadada" stroke="none" stroke-width="1" />
<rect x="441.4" y="46.95" width="3.612" height="1.8" rx="0.3" fill="#f0f0f0" stroke="none" stroke-width="1" />
<rect x="440.2" y="50.2" width="8.6" height="3.3" rx="1.0" fill="#dadada" stroke="none" stroke-width="1" />
<rect x="441.4" y="50.95" width="3.612" height="1.8" rx="0.3" fill="#f0f0f0" stroke="none" stroke-width="1" />
<rect x="445.4" y="47.4" width="9.4" height="9.4" rx="0" fill="#f2f2f2" stroke="none" stroke-width="1" />
<path d="M446 48h6.6l1.6 1.6v6.6h-8.2Z" fill="#a8a8a8" stroke="none" stroke-width="1" />
<rect x="447.6" y="48.6" width="5" height="2.6" rx="0" fill="#f2f2f2" stroke="none" stroke-width="1" />
<rect x="449.4" y="53.4" width="2.2" height="2.8" rx="0" fill="#f2f2f2" stroke="none" stroke-width="1" />
<rect x="464.3" y="43.1" width="9.4" height="3.7" rx="1.0" fill="#dadada" stroke="none" stroke-width="1" />
<rect x="465.5" y="44.05" width="3.948" height="1.8" rx="0.3" fill="#f0f0f0" stroke="none" stroke-width="1" />
<rect x="464.3" y="47.5" width="9.4" height="3.7" rx="1.0" fill="#dadada" stroke="none" stroke-width="1" />
<rect x="465.5" y="48.45" width="3.948" height="1.8" rx="0.3" fill="#f0f0f0" stroke="none" stroke-width="1" />
<rect x="464.3" y="51.9" width="9.4" height="3.7" rx="1.0" fill="#dadada" stroke="none" stroke-width="1" />
<rect x="465.5" y="52.85" width="3.948" height="1.8" rx="0.3" fill="#f0f0f0" stroke="none" stroke-width="1" />
<circle cx="473.1" cy="52.8" r="4" fill="#a8a8a8" stroke="none" stroke-width="1" />
<rect x="14.6" y="92.6" width="9" height="4.6" rx="0" fill="none" stroke="#6e6e6e" stroke-width="1.2" />
<path d="M16.2 94.9L21.2 94.9" stroke="#9ccfb6" stroke-width="1.4" fill="none" />
<rect x="21.8" y="94.2" width="1.2" height="1.4" rx="0" fill="#9ccfb6" stroke="none" stroke-width="1" />
<path d="M14.6 97L14.6 105.4" stroke="#6e6e6e" stroke-width="1.2" fill="none" />
<path d="M14 105.4L18.4 105.4" stroke="#6e6e6e" stroke-width="1.2" fill="none" />
<path d="M14.6 101.2L18.4 101.2" stroke="#6e6e6e" stroke-width="1.0" fill="none" />
<path d="M16.2 99.2L19.2 99.2" stroke="#9ccfb6" stroke-width="1.4" fill="none" />
<path d="M16.2 103.3L18 103.3" stroke="#9ccfb6" stroke-width="1.4" fill="none" />
<circle cx="23.2" cy="102.8" r="4.6" fill="#fff" stroke="none" stroke-width="1" />
<circle cx="23.2" cy="102.8" r="3.9" fill="#5e9f84" stroke="none" stroke-width="1" />
<path d="M21.2 102.9l1.5 1.5l2.6 -2.8" fill="none" stroke="#fff" stroke-width="1.3" />
<path d="M334.2 97.2l4.3 4.4l4.3 -4.4" fill="none" stroke="#555" stroke-width="1.2" />
<path d="M583.2 97.2l4.3 4.4l4.3 -4.4" fill="none" stroke="#ababab" stroke-width="1.2" />
<rect x="615.3" y="94.6" width="7.4" height="4.8" rx="0.6" fill="none" stroke="#6e6e6e" stroke-width="1.2" />
<rect x="611.6" y="98.9" width="7" height="4.6" rx="0.6" fill="#fff" stroke="#6e6e6e" stroke-width="1.2" />
<path d="M833.2 97.2l4.3 4.4l4.3 -4.4" fill="none" stroke="#555" stroke-width="1.2" />
<path d="M17.5 549.7V543.7Q17.5 542.4 18.8 542.4H27.5M26.4 542.6V552.3Q26.4 553.9 24.8 553.9H16.5A1.3 1.3 0 0 1 16.5 551.3H24.4A1.3 1.3 0 0 1 24.4 553.9" fill="none" stroke="#ebc572" stroke-width="1.15" stroke-linecap="round"/>
<circle cx="27.6" cy="543.7" r="1.25" fill="none" stroke="#ebc572" stroke-width="1.1" />
<rect x="81" y="541" width="16" height="14" rx="1.5" fill="#878787" stroke="none" stroke-width="1" />
<rect x="82.05" y="543.05" width="1.9" height="1.9" rx="0" fill="#fff" stroke="none" stroke-width="1" />
<rect x="85.05" y="543.05" width="1.9" height="1.9" rx="0" fill="#fff" stroke="none" stroke-width="1" />
<rect x="88.05" y="543.05" width="1.9" height="1.9" rx="0" fill="#fff" stroke="none" stroke-width="1" />
<rect x="91.05" y="543.05" width="1.9" height="1.9" rx="0" fill="#fff" stroke="none" stroke-width="1" />
<rect x="94.05" y="543.05" width="1.9" height="1.9" rx="0" fill="#fff" stroke="none" stroke-width="1" />
<rect x="82.05" y="546.05" width="1.9" height="1.9" rx="0" fill="#fff" stroke="none" stroke-width="1" />
<rect x="85.05" y="546.05" width="1.9" height="1.9" rx="0" fill="#fff" stroke="none" stroke-width="1" />
<rect x="88.05" y="546.05" width="1.9" height="1.9" rx="0" fill="#fff" stroke="none" stroke-width="1" />
<rect x="91.05" y="546.05" width="1.9" height="1.9" rx="0" fill="#fff" stroke="none" stroke-width="1" />
<rect x="94.05" y="546.05" width="1.9" height="1.9" rx="0" fill="#fff" stroke="none" stroke-width="1" />
<rect x="82.05" y="549.05" width="1.9" height="1.9" rx="0" fill="#fff" stroke="none" stroke-width="1" />
<rect x="85.05" y="549.05" width="1.9" height="1.9" rx="0" fill="#fff" stroke="none" stroke-width="1" />
<rect x="88.05" y="549.05" width="1.9" height="1.9" rx="0" fill="#fff" stroke="none" stroke-width="1" />
<rect x="91.05" y="549.05" width="1.9" height="1.9" rx="0" fill="#fff" stroke="none" stroke-width="1" />
<rect x="94.05" y="549.05" width="1.9" height="1.9" rx="0" fill="#fff" stroke="none" stroke-width="1" />
<rect x="82.05" y="552.05" width="1.9" height="1.9" rx="0" fill="#fff" stroke="none" stroke-width="1" />
<rect x="85.05" y="552.05" width="1.9" height="1.9" rx="0" fill="#fff" stroke="none" stroke-width="1" />
<rect x="88.05" y="552.05" width="1.9" height="1.9" rx="0" fill="#fff" stroke="none" stroke-width="1" />
<rect x="91.05" y="552.05" width="1.9" height="1.9" rx="0" fill="#fff" stroke="none" stroke-width="1" />
<rect x="94.05" y="552.05" width="1.9" height="1.9" rx="0" fill="#fff" stroke="none" stroke-width="1" />
<path d="M190.8 545.2h2.0l6.4 7h-2.0Z" fill="#0a0a0a" stroke="none" stroke-width="1" />
<path d="M199.2 545.2h-2.0l-6.4 7h2.0Z" fill="#0a0a0a" stroke="none" stroke-width="1" />
<path d="M984.2 546.8H992V554.6" fill="none" stroke="#0a0a0a" stroke-width="1.5" stroke-linejoin="miter"/>
<rect x="978.8" y="549.9" width="10.1" height="8.9" rx="0" fill="none" stroke="#0a0a0a" stroke-width="1.5" />
<path d="M985 552h2.0v0.6l-1.4 1.4h-0.6Z" fill="#0a0a0a" stroke="none" stroke-width="1" />
<path d="M11.4 579.2A4.5 4.5 0 0 0 8.1 586.8" fill="none" stroke="#3f7cc0" stroke-width="2.4" />
<path d="M11 576.5L14.8 579.5L11 582.3Z" fill="#3f7cc0" stroke="none" stroke-width="1" />
<path d="M12.6 587.8A4.5 4.5 0 0 0 15.9 580.2" fill="none" stroke="#3f7cc0" stroke-width="2.4" />
<path d="M13 590.5L9.2 587.5L13 584.7Z" fill="#3f7cc0" stroke="none" stroke-width="1" />
<path d="M40.70 585.78L36.78 589.70L31.22 589.70L27.30 585.78L27.30 580.22L31.22 576.30L36.78 576.30L40.70 580.22Z" fill="#f6f6f6" stroke="#c6c6c6" stroke-width="1" />
<path d="M39.10 585.11L36.11 588.10L31.89 588.10L28.90 585.11L28.90 580.89L31.89 577.90L36.11 577.90L39.10 580.89Z" fill="#bdbdbd" stroke="none" stroke-width="1" />
<rect x="47.1" y="573" width="1" height="20" rx="0" fill="#d1d1d1" stroke="none" stroke-width="1" />
<path d="M58.2 576.9h-2.5v12.8h10.8v-10.0l-2.8 -2.8h-0.4" fill="none" stroke="#6e6e6e" stroke-width="1.3" />
<path d="M61 581.6v-4.6" fill="none" stroke="#3f7cc0" stroke-width="2.0" />
<path d="M57.9 578.4l3.1 -3.6l3.1 3.6Z" fill="#3f7cc0" stroke="#3f7cc0" stroke-width="0.5" stroke-linejoin="round"/>
<path d="M78.6 582h5.8l-2.9 3.2Z" fill="#000" stroke="none" stroke-width="1" />
<rect x="91.8" y="576" width="13.2" height="13" rx="0.6" fill="#7c7c7c" stroke="none" stroke-width="1" />
<rect x="96.05" y="576.75" width="1.9" height="1.9" rx="0" fill="#fff" stroke="none" stroke-width="1" />
<rect x="99.15" y="576.75" width="1.9" height="1.9" rx="0" fill="#fff" stroke="none" stroke-width="1" />
<rect x="102.25" y="576.75" width="1.9" height="1.9" rx="0" fill="#fff" stroke="none" stroke-width="1" />
<rect x="96.05" y="579.95" width="1.9" height="1.9" rx="0" fill="#fff" stroke="none" stroke-width="1" />
<rect x="99.15" y="579.95" width="1.9" height="1.9" rx="0" fill="#fff" stroke="none" stroke-width="1" />
<rect x="102.25" y="579.95" width="1.9" height="1.9" rx="0" fill="#fff" stroke="none" stroke-width="1" />
<rect x="96.05" y="583.05" width="1.9" height="1.9" rx="0" fill="#fff" stroke="none" stroke-width="1" />
<rect x="99.15" y="583.05" width="1.9" height="1.9" rx="0" fill="#fff" stroke="none" stroke-width="1" />
<rect x="102.25" y="583.05" width="1.9" height="1.9" rx="0" fill="#fff" stroke="none" stroke-width="1" />
<rect x="96.05" y="586.15" width="1.9" height="1.9" rx="0" fill="#fff" stroke="none" stroke-width="1" />
<rect x="99.15" y="586.15" width="1.9" height="1.9" rx="0" fill="#fff" stroke="none" stroke-width="1" />
<rect x="102.25" y="586.15" width="1.9" height="1.9" rx="0" fill="#fff" stroke="none" stroke-width="1" />
<rect x="93.2" y="576.75" width="1.2" height="1.9" rx="0" fill="#b4b4b4" stroke="none" stroke-width="1" />
<rect x="93.2" y="579.95" width="1.2" height="1.9" rx="0" fill="#fff" stroke="none" stroke-width="1" />
<rect x="93.2" y="583.05" width="1.2" height="1.9" rx="0" fill="#fff" stroke="none" stroke-width="1" />
<rect x="93.2" y="586.15" width="1.2" height="1.9" rx="0" fill="#fff" stroke="none" stroke-width="1" />
<path d="M116.4 582h5.8l-2.9 3.2Z" fill="#000" stroke="none" stroke-width="1" />
<rect x="128" y="573" width="1" height="20" rx="0" fill="#d1d1d1" stroke="none" stroke-width="1" />
<rect x="137.1" y="576.2" width="9.8" height="13.8" rx="0.8" fill="#ababab" stroke="none" stroke-width="1" />
<rect x="138.5" y="577.5" width="7" height="2.2" rx="0" fill="#f2f2f2" stroke="none" stroke-width="1" />
<rect x="139.3" y="578.2" width="5.4" height="0.8" rx="0" fill="#ababab" stroke="none" stroke-width="1" />
<rect x="138.1" y="580.9" width="1.9" height="1.9" rx="0" fill="#f2f2f2" stroke="none" stroke-width="1" />
<rect x="141.1" y="580.9" width="1.9" height="1.9" rx="0" fill="#f2f2f2" stroke="none" stroke-width="1" />
<rect x="144.1" y="580.9" width="1.9" height="1.9" rx="0" fill="#f2f2f2" stroke="none" stroke-width="1" />
<rect x="138.1" y="583.95" width="1.9" height="1.9" rx="0" fill="#f2f2f2" stroke="none" stroke-width="1" />
<rect x="141.1" y="583.95" width="1.9" height="1.9" rx="0" fill="#f2f2f2" stroke="none" stroke-width="1" />
<rect x="144.1" y="583.95" width="1.9" height="1.9" rx="0" fill="#f2f2f2" stroke="none" stroke-width="1" />
<rect x="138.1" y="587" width="1.9" height="1.9" rx="0" fill="#f2f2f2" stroke="none" stroke-width="1" />
<rect x="141.1" y="587" width="1.9" height="1.9" rx="0" fill="#f2f2f2" stroke="none" stroke-width="1" />
<rect x="144.1" y="587" width="1.9" height="1.9" rx="0" fill="#f2f2f2" stroke="none" stroke-width="1" />
<circle cx="781" cy="581" r="4.4" fill="none" stroke="#a9a9a9" stroke-width="1.1" />
<path d="M784.2 584.2L785.8 585.8" stroke="#b8b8b8" stroke-width="1.4" fill="none" />
<path d="M785.6 585.6L789.6 589.6" stroke="#dcdcdc" stroke-width="2.6" fill="none" />
<rect x="932" y="573" width="20" height="20" rx="3" fill="#c9c9c9" stroke="none" stroke-width="1" />
<rect x="934.2" y="576.2" width="15.6" height="13.8" rx="1.5" fill="#7c7c7c" stroke="none" stroke-width="1" />
<rect x="935.15" y="578.15" width="1.9" height="1.9" rx="0" fill="#c9c9c9" stroke="none" stroke-width="1" />
<rect x="938.1" y="578.15" width="1.9" height="1.9" rx="0" fill="#c9c9c9" stroke="none" stroke-width="1" />
<rect x="941.05" y="578.15" width="1.9" height="1.9" rx="0" fill="#c9c9c9" stroke="none" stroke-width="1" />
<rect x="944" y="578.15" width="1.9" height="1.9" rx="0" fill="#c9c9c9" stroke="none" stroke-width="1" />
<rect x="946.95" y="578.15" width="1.9" height="1.9" rx="0" fill="#c9c9c9" stroke="none" stroke-width="1" />
<rect x="935.15" y="581.13" width="1.9" height="1.9" rx="0" fill="#c9c9c9" stroke="none" stroke-width="1" />
<rect x="938.1" y="581.13" width="1.9" height="1.9" rx="0" fill="#c9c9c9" stroke="none" stroke-width="1" />
<rect x="941.05" y="581.13" width="1.9" height="1.9" rx="0" fill="#c9c9c9" stroke="none" stroke-width="1" />
<rect x="944" y="581.13" width="1.9" height="1.9" rx="0" fill="#c9c9c9" stroke="none" stroke-width="1" />
<rect x="946.95" y="581.13" width="1.9" height="1.9" rx="0" fill="#c9c9c9" stroke="none" stroke-width="1" />
<rect x="935.15" y="584.11" width="1.9" height="1.9" rx="0" fill="#c9c9c9" stroke="none" stroke-width="1" />
<rect x="938.1" y="584.11" width="1.9" height="1.9" rx="0" fill="#c9c9c9" stroke="none" stroke-width="1" />
<rect x="941.05" y="584.11" width="1.9" height="1.9" rx="0" fill="#c9c9c9" stroke="none" stroke-width="1" />
<rect x="944" y="584.11" width="1.9" height="1.9" rx="0" fill="#c9c9c9" stroke="none" stroke-width="1" />
<rect x="946.95" y="584.11" width="1.9" height="1.9" rx="0" fill="#c9c9c9" stroke="none" stroke-width="1" />
<rect x="935.15" y="587.09" width="1.9" height="1.9" rx="0" fill="#c9c9c9" stroke="none" stroke-width="1" />
<rect x="938.1" y="587.09" width="1.9" height="1.9" rx="0" fill="#c9c9c9" stroke="none" stroke-width="1" />
<rect x="941.05" y="587.09" width="1.9" height="1.9" rx="0" fill="#c9c9c9" stroke="none" stroke-width="1" />
<rect x="944" y="587.09" width="1.9" height="1.9" rx="0" fill="#c9c9c9" stroke="none" stroke-width="1" />
<rect x="946.95" y="587.09" width="1.9" height="1.9" rx="0" fill="#c9c9c9" stroke="none" stroke-width="1" />
<rect x="958.7" y="576.8" width="10.6" height="12.6" rx="0" fill="#fff" stroke="#6e6e6e" stroke-width="1.2" />
<path d="M960.2 579.3L967.9 579.3" stroke="#6a6a6a" stroke-width="1.0" fill="none" />
<path d="M960.2 581.3L963.7 581.3" stroke="#6a6a6a" stroke-width="1.0" fill="none" />
<path d="M965.1 581.3L967.9 581.3" stroke="#6a6a6a" stroke-width="1.0" fill="none" />
<path d="M960.2 583.3L967.9 583.3" stroke="#6a6a6a" stroke-width="1.0" fill="none" />
<path d="M960.2 585.3L961.9 585.3" stroke="#6a6a6a" stroke-width="1.0" fill="none" />
<path d="M963.1 585.3L967.9 585.3" stroke="#6a6a6a" stroke-width="1.0" fill="none" />
<path d="M960.2 587.4L964.9 587.4" stroke="#6a6a6a" stroke-width="1.0" fill="none" />
<path d="M966.3 587.4L967.9 587.4" stroke="#6a6a6a" stroke-width="1.0" fill="none" />
<path d="M980.8 576.8h8.0l2.6 2.6v10.0h-10.6Z" fill="#fff" stroke="#6e6e6e" stroke-width="1.2" stroke-linejoin="round"/>
<path d="M988.6 577v2.6h2.6" fill="none" stroke="#6e6e6e" stroke-width="1" />
<rect x="982" y="580.9" width="8" height="7" rx="0" fill="#3f7cc0" stroke="none" stroke-width="1" />
<path d="M982.8 586.6l1.6 -1.8l1.2 1.0l1.6 -2.4l1.0 0.8l1.4 -1.8" fill="none" stroke="#eef4fb" stroke-width="0.9" />
<path d="M1006.6 41.6h7.6l3.2 3.2v9.6h-10.8Z" fill="none" stroke="#7a7a7a" stroke-width="1.2" stroke-linejoin="round"/>
<path d="M1014 41.8v3.2h3.2" fill="none" stroke="#7a7a7a" stroke-width="1" />
<path d="M1008.6 44.6L1011.4 44.6" stroke="#7a7a7a" stroke-width="1" fill="none" />
<path d="M1008.6 47.2L1015.2 47.2" stroke="#7a7a7a" stroke-width="1" fill="none" />
<path d="M1008.6 49.6L1015.2 49.6" stroke="#7a7a7a" stroke-width="1" fill="none" />
<path d="M1008.6 52L1012.6 52" stroke="#7a7a7a" stroke-width="1" fill="none" />
<rect x="1004.6" y="131.9" width="4.8" height="3.6" rx="0" fill="none" stroke="#6e6e6e" stroke-width="1.2" />
<rect x="1014.2" y="127" width="5.8" height="4.5" rx="0.6" fill="#3f7cc0" stroke="none" stroke-width="1" />
<rect x="1014.6" y="135.8" width="4.8" height="3.6" rx="0" fill="none" stroke="#6e6e6e" stroke-width="1.2" />
<path d="M1009.6 133.7h1.4L1013.8 130.2M1011 133.7L1014.2 137.4" fill="none" stroke="#6e6e6e" stroke-width="1.2" />
</svg>
</body></html>
